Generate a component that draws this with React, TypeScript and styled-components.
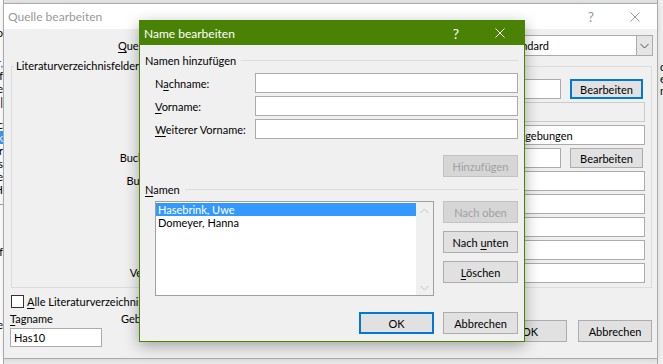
import React from "react";
import styled, { createGlobalStyle, css } from "styled-components";

const FONT = `Lato, "Segoe UI", "Liberation Sans", sans-serif`;

const GlobalStyle = createGlobalStyle`
  html, body { margin: 0; padding: 0; }
  body { background: #e9e9e9; font-family: ${FONT}; font-size: 11px; color: #000; }
  *, *::before, *::after { box-sizing: border-box; }
`;

const Desktop = styled.div`
  position: relative;
  width: 663px;
  height: 364px;
  overflow: hidden;
  background: #e9e9e9;
`;

/* ---------- windows lying behind ---------- */
const BackLeft = styled.div`
  position: absolute;
  left: -150px;
  top: 0;
  width: 154px;
  height: 364px;
  background: #fff;
  border-right: 1px solid #a9a9a9;
  display: flex;
  flex-direction: column;
  padding-top: 26px;
  overflow: hidden;
`;

const BackRow = styled.div<{ $sel?: boolean; $blue?: boolean; $gap?: number }>`
  height: 13px;
  line-height: 13px;
  text-align: right;
  white-space: nowrap;
  margin-top: ${(p) => p.$gap ?? 0}px;
  background: ${(p) => (p.$sel ? "#3399ff" : "transparent")};
  color: ${(p) => (p.$sel ? "#fff" : p.$blue ? "#1a5fb4" : "#000")};
`;

const BackRule = styled.div<{ $gap?: number }>`
  height: 1px;
  background: #a0a0a0;
  margin-top: ${(p) => p.$gap ?? 0}px;
`;

const BackRight = styled.div`
  position: absolute;
  left: 657px;
  top: 0;
  width: 120px;
  height: 364px;
  background: #f0f0f0;
  border-left: 1px solid #a9a9a9;
  display: flex;
  flex-direction: column;
  padding: 61px 0 0 2px;
`;

const BackRightRow = styled.div`
  height: 12px;
  line-height: 12px;
  white-space: nowrap;
`;

/* ---------- window chrome ---------- */
const Window = styled.div`
  position: absolute;
  left: 3px;
  top: 3px;
  width: 655px;
  height: 356px;
  background: #f0f0f0;
  border: 1px solid #ababab;
  display: flex;
  flex-direction: column;
  box-shadow: 0 0 6px rgba(0, 0, 0, 0.12);
`;

const TitleBar = styled.div<{ $active?: boolean; $h: number }>`
  flex: none;
  height: ${(p) => p.$h}px;
  display: flex;
  align-items: center;
  padding-left: 4px;
  background: ${(p) => (p.$active ? "#498205" : "#ffffff")};
  color: ${(p) => (p.$active ? "#ffffff" : "#999999")};
  font-size: 12px;
`;

const TitleText = styled.span`
  flex: 1;
  white-space: nowrap;
`;

const CaptionGroup = styled.div<{ $pr: number }>`
  display: flex;
  align-self: stretch;
  padding-right: ${(p) => p.$pr}px;
`;

const CaptionButton = styled.div`
  width: 44px;
  display: flex;
  align-items: center;
  justify-content: center;
  font-size: 14px;
  color: inherit;
`;

const CloseIcon = () => (
  <svg width="10" height="10" viewBox="0 0 10 10" aria-hidden>
    <path d="M0.5 0.5 L9.5 9.5 M9.5 0.5 L0.5 9.5" stroke="currentColor" strokeWidth="1" fill="none" />
  </svg>
);

/* ---------- common controls ---------- */
const Key = styled.span`
  text-decoration: underline;
  text-underline-offset: 2px;
`;

const TextBox = styled.input<{ $disabled?: boolean }>`
  display: block;
  height: 20px;
  min-width: 0;
  width: 100%;
  padding: 0 3px;
  margin: 0;
  font: inherit;
  font-size: 11px;
  color: #000;
  background: ${(p) => (p.$disabled ? "#f0f0f0" : "#ffffff")};
  border: 1px solid ${(p) => (p.$disabled ? "#cccccc" : "#ababab")};
  outline: none;
`;

const Button = styled.button<{ $default?: boolean; $w?: number; $h?: number }>`
  flex: none;
  width: ${(p) => p.$w ?? 75}px;
  height: ${(p) => p.$h ?? 22}px;
  padding: 0;
  margin: 0;
  font: inherit;
  font-size: 11px;
  color: #000;
  background: #e1e1e1;
  border: 1px solid #adadad;
  ${(p) =>
    p.$default &&
    css`
      border: 2px solid #0078d7;
    `}
  &:disabled {
    background: #d6d6d6;
    border-color: #c2c2c2;
    color: #a0a0a0;
  }
`;

/* ---------- Quelle bearbeiten ---------- */
const QBody = styled.div`
  flex: 1;
  display: flex;
  flex-direction: column;
  padding: 6px 5px 0 6px;
`;

const TopRow = styled.div`
  display: flex;
  align-items: center;
  height: 21px;
`;

const TypeLabel = styled.span`
  margin-left: 108px;
  white-space: nowrap;
`;

const Combo = styled.div<{ $w: number; $ml?: number; $mr?: number }>`
  display: flex;
  width: ${(p) => p.$w}px;
  height: 21px;
  margin-left: ${(p) => p.$ml ?? 0}px;
  margin-right: ${(p) => p.$mr ?? 0}px;
  background: #fff;
  border: 1px solid #ababab;
`;

const ComboText = styled.span`
  flex: 1;
  padding-left: 3px;
  line-height: 19px;
  white-space: nowrap;
`;

const ComboArrow = styled.span`
  flex: none;
  width: 16px;
  display: flex;
  align-items: center;
  justify-content: center;
  background: #e5e5e5;
  border-left: 1px solid #ababab;
  color: #505050;
`;

const Spacer = styled.div`
  flex: 1;
`;

const LangLabel = styled.span`
  margin-right: 8px;
  white-space: nowrap;
`;

const Group = styled.fieldset`
  margin: 2px 0 0 1px;
  padding: 5px 6px 4px 0;
  border: 1px solid #dcdcdc;
  min-width: 0;
`;

const GroupLegend = styled.legend`
  margin-left: 2px;
  padding: 0 2px;
  line-height: 16px;
  font-size: 11px;
  white-space: nowrap;
`;

const FieldGrid = styled.div`
  display: grid;
  grid-template-columns: 158px 1fr;
  column-gap: 3px;
  row-gap: 3px;
`;

const FieldLabel = styled.span`
  text-align: right;
  line-height: 20px;
  white-space: nowrap;
`;

const FieldWithButton = styled.div`
  display: flex;
  gap: 9px;
  padding-right: 2px;
`;

const CheckRow = styled.div`
  display: flex;
  align-items: center;
  margin: 7px 0 0 1px;
  height: 13px;
  white-space: nowrap;
`;

const CheckBox = styled.span`
  flex: none;
  width: 13px;
  height: 13px;
  border: 1px solid #333;
  background: #fff;
  margin-right: 3px;
`;

const BottomRow = styled.div`
  display: flex;
  align-items: flex-start;
  margin-top: 3px;
`;

const TagColumn = styled.div`
  display: flex;
  flex-direction: column;
  width: 92px;
`;

const SmallLabel = styled.span`
  line-height: 16px;
  white-space: nowrap;
`;

const TagInput = styled(TextBox)`
  height: 19px;
  margin-top: 1px;
`;

const LocaleLabel = styled(SmallLabel)`
  margin-left: 19px;
`;

const ButtonRow = styled.div<{ $mt: number }>`
  display: flex;
  gap: 11px;
  margin-left: auto;
  margin-top: ${(p) => p.$mt}px;
`;

/* ---------- Name bearbeiten ---------- */
const Dialog = styled.div`
  position: absolute;
  left: 139px;
  top: 20px;
  width: 386px;
  height: 322px;
  background: #f0f0f0;
  border: 1px solid #498205;
  box-shadow: 0 4px 14px rgba(0, 0, 0, 0.32);
  display: flex;
  flex-direction: column;
`;

const DBody = styled.div`
  flex: 1;
  display: flex;
  flex-direction: column;
  padding: 7px 6px 0 5px;
`;

const SectionHeader = styled.div<{ $mt?: number }>`
  display: flex;
  align-items: center;
  height: 16px;
  margin-top: ${(p) => p.$mt ?? 0}px;
  white-space: nowrap;
  &::after {
    content: "";
    flex: 1;
    margin-left: 5px;
    border-top: 1px solid #dcdcdc;
  }
`;

const FormRows = styled.div`
  display: flex;
  flex-direction: column;
  gap: 3px;
  margin-top: 5px;
`;

const FormRow = styled.div`
  display: flex;
  align-items: center;
  height: 20px;
  padding-left: 10px;
`;

const FormLabel = styled.span`
  flex: none;
  width: 100px;
  white-space: nowrap;
`;

const RightButton = styled.div`
  display: flex;
  justify-content: flex-end;
  margin-top: 16px;
`;

const ListArea = styled.div`
  display: flex;
  gap: 9px;
  margin-top: 4px;
  padding-left: 10px;
  height: 95px;
`;

const ListBox = styled.div`
  flex: 1;
  display: flex;
  background: #fff;
  border: 1px solid #a0a0a0;
`;

const ListItems = styled.div`
  flex: 1;
  padding-top: 1px;
`;

const ListItem = styled.div<{ $sel?: boolean }>`
  height: 13px;
  line-height: 13px;
  padding-left: 2px;
  white-space: nowrap;
  background: ${(p) => (p.$sel ? "#3399ff" : "transparent")};
  color: ${(p) => (p.$sel ? "#fff" : "#000")};
`;

const ScrollBar = styled.div`
  flex: none;
  width: 17px;
  display: flex;
  flex-direction: column;
  justify-content: space-between;
  align-items: center;
  background: #f0f0f0;
  padding: 6px 0 4px;
  color: #c2c2c2;
`;

const SideButtons = styled.div`
  display: flex;
  flex-direction: column;
  gap: 8px;
`;

const DialogButtons = styled.div`
  display: flex;
  justify-content: flex-end;
  gap: 9px;
  margin-top: 16px;
`;

const Chevron = ({ up }: { up?: boolean }) => (
  <svg width="9" height="6" viewBox="0 0 9 6" aria-hidden>
    <path
      d={up ? "M0.5 5 L4.5 1 L8.5 5" : "M0.5 1 L4.5 5 L8.5 1"}
      stroke="currentColor"
      strokeWidth="1"
      fill="none"
    />
  </svg>
);

const backRows: { t: string; sel?: boolean; blue?: boolean; gap?: number }[] = [
  { t: "Info" },
  { t: "", gap: 0 },
  { t: "Autor,", blue: true, gap: 4 },
  { t: "Buchf" },
  { t: "Seite" },
  { t: "|" },
  { t: "Quellc", gap: 10 },
  { t: "Musik", sel: true },
  { t: "Autor" },
  { t: "Texts" },
  { t: "Seite" },
  { t: "DH" },
];

const fields: { label: string; value: string; button?: boolean; disabled?: boolean }[] = [
  { label: "Autor", value: "Hasebrink, Uwe; Domeyer, Hanna", button: true },
  { label: "", value: "", disabled: true },
  { label: "Titel", value: "Zum Wandel von Informationsrepertoires in konvergierenden Medienumgebungen" },
  { label: "Buchautor", value: "Hartmann, Maren; Hepp, Andreas", button: true },
  { label: "Buchtitel", value: "Die Mediatisierung der Alltagswelt" },
  { label: "Jahr", value: "2010" },
  { label: "Seiten", value: "59-77" },
  { label: "Stadt", value: "Wiesbaden" },
  { label: "Verleger", value: "VS Verlag" },
];

export default function App() {
  return (
    <Desktop>
      <GlobalStyle />

      <BackLeft>
        {backRows.map((r, i) => (
          <BackRow key={i} $sel={r.sel} $blue={r.blue} $gap={r.gap}>
            {r.t}
          </BackRow>
        ))}
        <BackRule $gap={8} />
        <BackRow $gap={40}>Treff</BackRow>
        <BackRow $gap={60}>Seite</BackRow>
      </BackLeft>

      <BackRight>
        <BackRightRow>d</BackRightRow>
        <BackRightRow>e</BackRightRow>
        <BackRightRow>n</BackRightRow>
      </BackRight>

      <Window>
        <TitleBar $h={25}>
          <TitleText>Quelle bearbeiten</TitleText>
          <CaptionGroup $pr={0}>
            <CaptionButton>?</CaptionButton>
            <CaptionButton>
              <CloseIcon />
            </CaptionButton>
          </CaptionGroup>
        </TitleBar>
        <QBody>
          <TopRow>
            <TypeLabel>
              <Key>Q</Key>uellentyp
            </TypeLabel>
            <Combo $w={160} $ml={8}>
              <ComboText>Abschnitt eines Buches</ComboText>
              <ComboArrow>
                <Chevron />
              </ComboArrow>
            </Combo>
            <Spacer />
            <LangLabel>Sprache</LangLabel>
            <Combo $w={151} $mr={-1}>
              <ComboText>Standard</ComboText>
              <ComboArrow>
                <Chevron />
              </ComboArrow>
            </Combo>
          </TopRow>

          <Group>
            <GroupLegend>Literaturverzeichnisfelder für APA</GroupLegend>
            <FieldGrid>
              {fields.map((f, i) => (
                <React.Fragment key={i}>
                  <FieldLabel>{f.label}</FieldLabel>
                  {f.button ? (
                    <FieldWithButton>
                      <TextBox value={f.value} readOnly />
                      <Button $w={73} $h={20} $default={i === 0}>
                        Bearbeiten
                      </Button>
                    </FieldWithButton>
                  ) : (
                    <TextBox value={f.value} readOnly $disabled={f.disabled} />
                  )}
                </React.Fragment>
              ))}
            </FieldGrid>
          </Group>

          <CheckRow>
            <CheckBox />
            <span>
              <Key>A</Key>lle Literaturverzeichnisfelder anzeigen
            </span>
          </CheckRow>

          <BottomRow>
            <TagColumn>
              <SmallLabel>
                <Key>T</Key>agname
              </SmallLabel>
              <TagInput value="Has10" readOnly />
            </TagColumn>
            <LocaleLabel>Gebietsschema</LocaleLabel>
            <ButtonRow $mt={9}>
              <Button $w={74}>OK</Button>
              <Button $w={74}>Abbrechen</Button>
            </ButtonRow>
          </BottomRow>
        </QBody>
      </Window>

      <Dialog>
        <TitleBar $active $h={24}>
          <TitleText>Name bearbeiten</TitleText>
          <CaptionGroup $pr={2}>
            <CaptionButton>?</CaptionButton>
            <CaptionButton>
              <CloseIcon />
            </CaptionButton>
          </CaptionGroup>
        </TitleBar>
        <DBody>
          <SectionHeader>Namen hinzufügen</SectionHeader>
          <FormRows>
            <FormRow>
              <FormLabel>
                N<Key>a</Key>chname:
              </FormLabel>
              <TextBox value="" readOnly />
            </FormRow>
            <FormRow>
              <FormLabel>
                <Key>V</Key>orname:
              </FormLabel>
              <TextBox value="" readOnly />
            </FormRow>
            <FormRow>
              <FormLabel>
                <Key>W</Key>eiterer Vorname:
              </FormLabel>
              <TextBox value="" readOnly />
            </FormRow>
          </FormRows>
          <RightButton>
            <Button disabled>Hinzufügen</Button>
          </RightButton>

          <SectionHeader $mt={4}>
            <span>
              <Key>N</Key>amen
            </span>
          </SectionHeader>
          <ListArea>
            <ListBox>
              <ListItems>
                <ListItem $sel>Hasebrink, Uwe</ListItem>
                <ListItem>Domeyer, Hanna</ListItem>
              </ListItems>
              <ScrollBar>
                <Chevron up />
                <Chevron />
              </ScrollBar>
            </ListBox>
            <SideButtons>
              <Button disabled>Nach oben</Button>
              <Button>
                Nach <Key>u</Key>nten
              </Button>
              <Button>
                <Key>L</Key>öschen
              </Button>
            </SideButtons>
          </ListArea>

          <DialogButtons>
            <Button $default>OK</Button>
            <Button>Abbrechen</Button>
          </DialogButtons>
        </DBody>
      </Dialog>
    </Desktop>
  );
}
